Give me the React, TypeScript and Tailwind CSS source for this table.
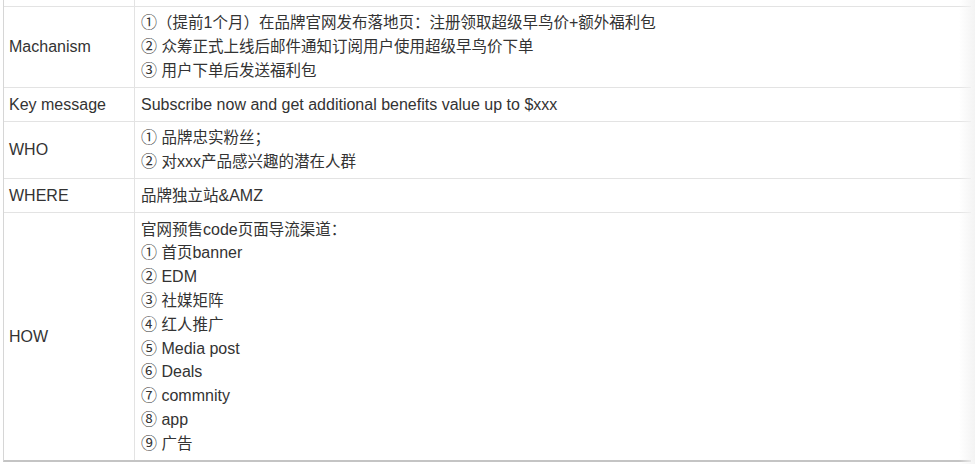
const rows: { label: string; h: string; lead: string; lines: string[] }[] = [
  {
    label: "Machanism",
    h: "h-[81px]",
    lead: "leading-[24px]",
    lines: [
      "①（提前1个月）在品牌官网发布落地页：注册领取超级早鸟价+额外福利包",
      "② 众筹正式上线后邮件通知订阅用户使用超级早鸟价下单",
      "③ 用户下单后发送福利包",
    ],
  },
  {
    label: "Key message",
    h: "h-[34px]",
    lead: "leading-[24px]",
    lines: ["Subscribe now and get additional benefits value up to $xxx"],
  },
  {
    label: "WHO",
    h: "h-[57px]",
    lead: "leading-[24px]",
    lines: ["① 品牌忠实粉丝；", "② 对xxx产品感兴趣的潜在人群"],
  },
  {
    label: "WHERE",
    h: "h-[34px]",
    lead: "leading-[24px]",
    lines: ["品牌独立站&AMZ"],
  },
  {
    label: "HOW",
    h: "h-[247px]",
    lead: "leading-[23.8px]",
    lines: [
      "官网预售code页面导流渠道：",
      "① 首页banner",
      "② EDM",
      "③ 社媒矩阵",
      "④ 红人推广",
      "⑤ Media post",
      "⑥ Deals",
      "⑦ commnity",
      "⑧ app",
      "⑨ 广告",
    ],
  },
];

// CJK runs are set a touch smaller than the latin text, like the source sheet
const cjk = /([\u3000-\u303f\u4e00-\u9fff\uff00-\uffef]+)/;

function Line({ text }: { text: string }) {
  return (
    <div>
      {text.split(cjk).map((part, i) =>
        cjk.test(part) ? (
          <span key={i} className="text-[15.5px]">
            {part}
          </span>
        ) : (
          <span key={i}>{part}</span>
        )
      )}
    </div>
  );
}

export default function App() {
  return (
    <div
      className="relative w-[975px] h-[464px] bg-white overflow-hidden text-[16px] text-[#333]"
      style={{ fontFamily: '"Liberation Sans", Arial, "Noto Sans CJK SC", sans-serif' }}
    >
      <div className="ml-[3px] w-[968px] border-l border-[#d6d6d6] border-b-2 border-b-[#c4c4c4]">
        <div className="flex h-[7px] border-b border-[#e3e3e3]">
          <div className="w-[131px] border-r border-[#e3e3e3]" />
          <div className="flex-1" />
        </div>
        {rows.map((row) => (
          <div
            key={row.label}
            className={`flex ${row.h} ${row.lead} border-b border-[#e3e3e3] last:border-b-0`}
          >
            <div className="w-[131px] shrink-0 flex items-center pl-[5px] border-r border-[#e3e3e3]">
              {row.label}
            </div>
            <div className="flex-1 flex flex-col justify-center pl-[6px]">
              {row.lines.map((line, i) => (
                <Line key={i} text={line} />
              ))}
            </div>
          </div>
        ))}
      </div>
      <div className="absolute top-0 right-0 w-[16px] h-full bg-gradient-to-r from-transparent to-[#f3f3f3]" />
    </div>
  );
}
